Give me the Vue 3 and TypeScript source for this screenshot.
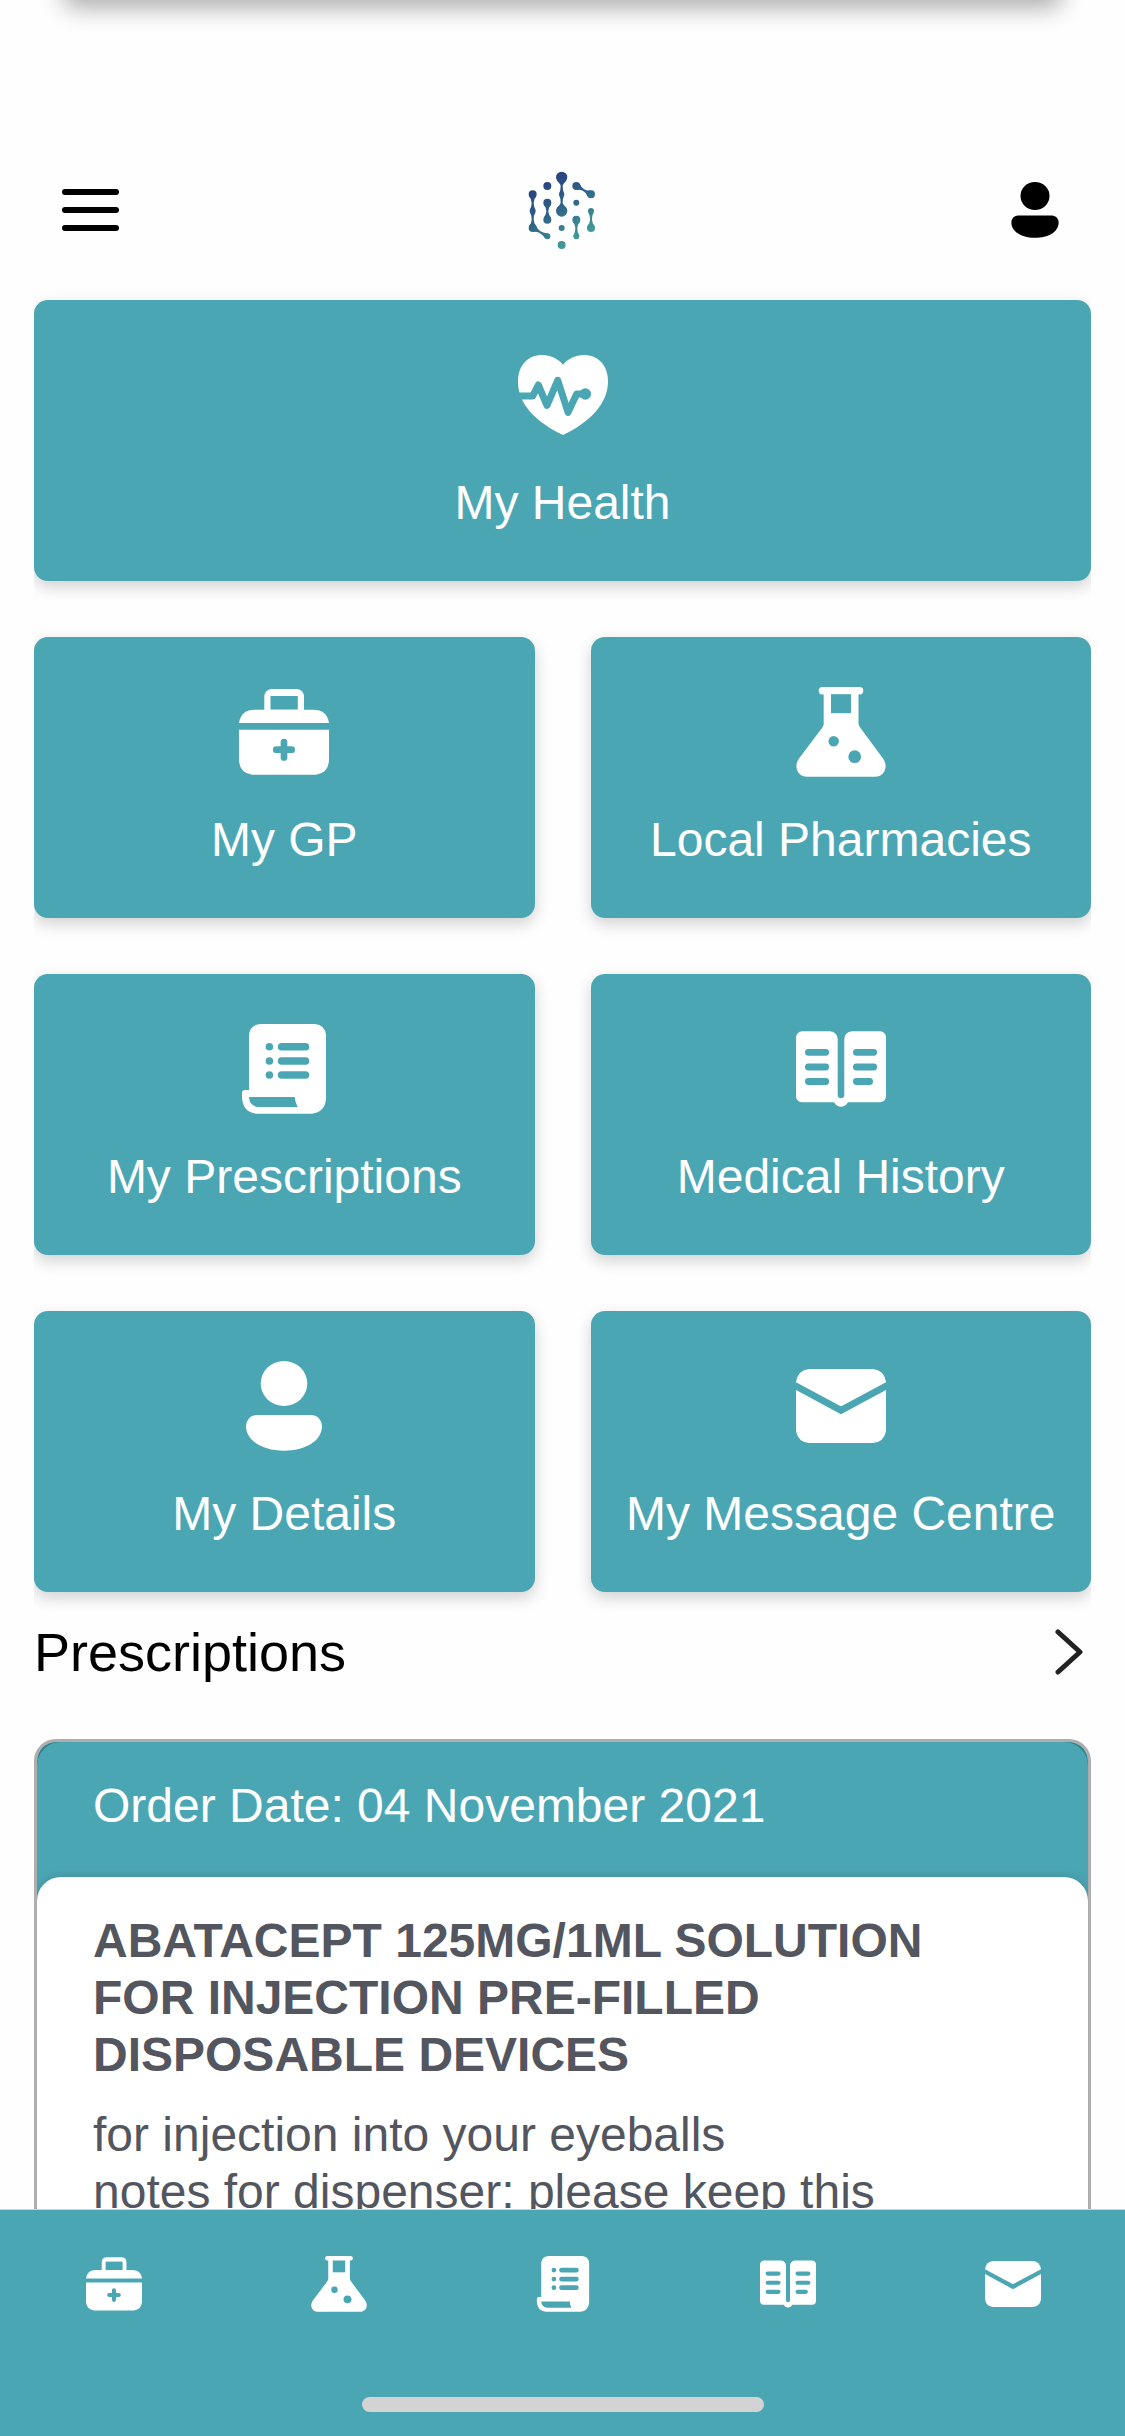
<script setup lang="ts">
interface Tile {
  label: string
  icon: string
  wide?: boolean
}

interface Dot {
  x: number
  y: number
  r: number
}

const tiles: Tile[] = [
  { label: 'My Health', icon: 'heart', wide: true },
  { label: 'My GP', icon: 'kit' },
  { label: 'Local Pharmacies', icon: 'flask' },
  { label: 'My Prescriptions', icon: 'scroll' },
  { label: 'Medical History', icon: 'book' },
  { label: 'My Details', icon: 'user' },
  { label: 'My Message Centre', icon: 'mail' },
]

const tabs: Tile[] = tiles.filter((t) => !t.wide && t.icon !== 'user')

const dots: Dot[] = [
  { x: 185, y: 83, r: 17 },
  { x: 185, y: 134, r: 8 },
  { x: 185, y: 184, r: 17 },
  { x: 142, y: 109, r: 12 },
  { x: 229, y: 109, r: 12 },
  { x: 273, y: 134, r: 12 },
  { x: 98, y: 134, r: 12 },
  { x: 98, y: 184, r: 9 },
  { x: 98, y: 235, r: 12 },
  { x: 142, y: 260, r: 9 },
  { x: 142, y: 159, r: 12 },
  { x: 142, y: 210, r: 12 },
  { x: 229, y: 159, r: 9 },
  { x: 229, y: 210, r: 12 },
  { x: 229, y: 260, r: 9 },
  { x: 273, y: 184, r: 9 },
  { x: 273, y: 235, r: 12 },
  { x: 185, y: 235, r: 9 },
  { x: 185, y: 286, r: 12 },
]

const links: [number, number][] = [
  [0, 1], [1, 2], [4, 5], [6, 7], [7, 8], [8, 9], [10, 11], [13, 14], [15, 16],
]

// Tapered neck between two dots of the logo, narrowest at its middle.
function neck([from, to]: [number, number]): string {
  const a = dots[from]
  const b = dots[to]
  const len = Math.hypot(b.x - a.x, b.y - a.y)
  const ux = (b.x - a.x) / len
  const uy = (b.y - a.y) / len
  const at = (x: number, y: number, side: number) => `${x - uy * side} ${y + ux * side}`
  const nearA = (side: number) => at(a.x + ux * a.r * 0.5, a.y + uy * a.r * 0.5, side * a.r * 0.86)
  const nearB = (side: number) => at(b.x - ux * b.r * 0.5, b.y - uy * b.r * 0.5, side * b.r * 0.86)
  const mid = (side: number) => at((a.x + b.x) / 2, (a.y + b.y) / 2, side)
  const bendA = (side: number) => at(a.x + ux * (a.r + 4), a.y + uy * (a.r + 4), side * 3)
  const bendB = (side: number) => at(b.x - ux * (b.r + 4), b.y - uy * (b.r + 4), side * 3)
  return (
    `M${nearA(1)}Q${bendA(1)} ${mid(3)}Q${bendB(1)} ${nearB(1)}` +
    `L${nearB(-1)}Q${bendB(-1)} ${mid(-3)}Q${bendA(-1)} ${nearA(-1)}Z`
  )
}
</script>

<template>
  <div class="app">
    <svg class="sprite" aria-hidden="true">
      <symbol id="heart" viewBox="0 0 90 90">
        <path fill="currentColor" d="M45 14.7C40 8.500 32 5 24.500 5C10 5 0 15 0 32C0 54 18 72 45 85C72 72 90 54 90 31C90 15 80 5 65.500 5C58 5 50 8.500 45 14.700z" />
        <path fill="none" stroke="#4ba6b4" stroke-width="7" stroke-linecap="round" stroke-linejoin="round" d="M-4 46H14.700L20.300 35L29 55.300L39.700 30.300L50 62.300L58.700 44H67" />
        <circle cx="67.3" cy="44" r="5.8" fill="#4ba6b4" />
      </symbol>
      <symbol id="kit" viewBox="0 0 90 90">
        <rect x="25.3" y="2" width="39.7" height="30" rx="7.5" fill="currentColor" />
        <rect x="31.5" y="9" width="27.3" height="13.700" fill="#4ba6b4" />
        <path fill="currentColor" d="M0 36Q2 22.700 16 22.700H74Q88 22.700 90 36z" />
        <path fill="currentColor" d="M0 42.700H90V74Q89 86 77 87.700H13Q1 86 0 74z" />
        <path fill="none" stroke="#4ba6b4" stroke-width="6.7" stroke-linecap="round" d="M45 55V70.400M37.300 62.700H52.700" />
      </symbol>
      <symbol id="flask" viewBox="0 0 90 90">
        <rect x="22.7" y="0" width="44.6" height="7.4" rx="3.7" fill="currentColor" />
        <path fill="currentColor" d="M27.700 5V37.500Q27.400 39 26 41L3 71.500C-3 80 2 89.700 11 89.700H79C88 89.700 93 80 87 71.500L64.500 41Q62.700 38.500 62.500 37V5z" />
        <rect x="35" y="7.2" width="20" height="19" fill="#4ba6b4" />
        <circle cx="37.7" cy="54.3" r="5.2" fill="#4ba6b4" />
        <circle cx="58.7" cy="69.7" r="6.4" fill="#4ba6b4" />
      </symbol>
      <symbol id="scroll" viewBox="0 0 90 90">
        <path fill="currentColor" d="M10 66V11Q11 1 21 0H76Q86 1 87 11V75Q86 88 73 89.700H17Q4 88 3 74V69Q3 66 6 66z" />
        <path fill="#4ba6b4" d="M10 73H55.800Q56 78 58.700 83H19Q10.500 82 10 73z" />
        <g fill="#4ba6b4">
          <circle cx="30.4" cy="22.7" r="3.8" />
          <circle cx="30.4" cy="37" r="3.8" />
          <circle cx="30.4" cy="51" r="3.8" />
        </g>
        <path fill="none" stroke="#4ba6b4" stroke-width="7.6" stroke-linecap="round" d="M42.600 22.700H66.500M42.600 37H66.500M42.600 51H66.500" />
      </symbol>
      <symbol id="book" viewBox="0 0 90 90">
        <path fill="currentColor" d="M6 7.300H34Q41 8 41.700 15V71Q42 74.300 45 74.300Q48 74.300 48.300 71V15Q49 8 56 7.300H84Q89.500 8 90 13V73Q89 78 84 78.300H52Q49.500 82.700 45 82.700Q40.500 82.700 38 78.300H6Q1 78 0 73V13Q1 8 6 7.300z" />
        <path fill="none" stroke="#4ba6b4" stroke-width="6.8" stroke-linecap="round" d="M12.400 28.300H29.700M12.400 43H29.700M12.400 57.500H29.700M60.400 28.300H77.700M60.400 43H77.700M60.400 57.500H73.600" />
      </symbol>
      <symbol id="user" viewBox="0 0 90 90">
        <ellipse cx="45" cy="22.5" rx="23.3" ry="22.5" fill="currentColor" />
        <path fill="currentColor" d="M17 54H73Q82 55 83 65C83 80 66 89.700 45 89.700S7 80 7 65Q8 55 17 54z" />
      </symbol>
      <symbol id="mail" viewBox="0 0 90 90">
        <path fill="currentColor" d="M13 8H77Q88 9 90 21V70Q88 81 77 82H13Q2 81 0 70V21Q2 9 13 8z" />
        <path fill="none" stroke="#4ba6b4" stroke-width="7" d="M-4 23L45 49.300L94 23" />
      </symbol>
    </svg>

    <div class="content">
      <header class="topbar">
        <div class="sheet"></div>
        <button class="icon-btn menu" type="button" aria-label="Menu">
          <span></span><span></span><span></span>
        </button>
        <svg class="logo" viewBox="84 64 207 237" role="img" aria-label="Home">
          <defs>
            <linearGradient id="logoFill" gradientUnits="userSpaceOnUse" x1="130" y1="90" x2="240" y2="260">
              <stop offset="0" stop-color="#2a3f80" />
              <stop offset="0.5" stop-color="#2f6689" />
              <stop offset="1" stop-color="#429a98" />
            </linearGradient>
          </defs>
          <g fill="url(#logoFill)">
            <path :d="links.map(neck).join('')" />
            <path :d="dots.map((d) => `M${d.x - d.r} ${d.y}a${d.r} ${d.r} 0 1 1 ${2 * d.r} 0a${d.r} ${d.r} 0 1 1 ${-2 * d.r} 0Z`).join('')" />
          </g>
        </svg>
        <button class="icon-btn profile" type="button" aria-label="Profile">
          <svg class="small-icon"><use href="#user" /></svg>
        </button>
      </header>

      <main>
        <div class="tiles">
          <button v-for="t in tiles" :key="t.label" type="button" class="tile" :class="{ wide: t.wide }">
            <svg class="tile-icon" aria-hidden="true"><use :href="'#' + t.icon" /></svg>
            <span>{{ t.label }}</span>
          </button>
        </div>

        <section class="prescriptions">
          <a class="section-head" href="#prescriptions">
            <h2>Prescriptions</h2>
            <svg class="chevron" viewBox="0 0 28 46" aria-hidden="true">
              <path d="M3 3L25 23L3 43" fill="none" stroke="#222" stroke-width="5" stroke-linecap="round" stroke-linejoin="round" />
            </svg>
          </a>
          <article class="order">
            <div class="order-wrap">
              <p class="order-date">Order Date: 04 November 2021</p>
            </div>
            <div class="order-body">
              <h3>ABATACEPT 125MG/1ML SOLUTION FOR INJECTION PRE-FILLED DISPOSABLE DEVICES</h3>
              <p>for injection into your eyeballs<br />notes for dispenser: please keep this</p>
            </div>
          </article>
        </section>
      </main>
    </div>

    <nav class="tabbar" aria-label="Main">
      <div class="tabs">
        <a v-for="t in tabs" :key="t.icon" :href="'#tab-' + t.icon" :aria-label="t.label">
          <svg class="small-icon"><use :href="'#' + t.icon" /></svg>
        </a>
      </div>
      <div class="home-bar"></div>
    </nav>
  </div>
</template>

<style>
body {
  margin: 0;
  background: #fefefe;
}
</style>

<style scoped>
.app {
  --teal: #4ba6b4;
  display: flex;
  flex-direction: column;
  height: 100vh;
  font-family: "Liberation Sans", Arial, sans-serif;
  font-size: 48px;
  line-height: 56px;
  color: #000;
}

.sprite {
  position: absolute;
  width: 0;
  height: 0;
}

.content {
  flex: 1;
  min-height: 0;
  overflow: hidden auto;
  scrollbar-width: none;
}

.topbar {
  position: relative;
  display: grid;
  grid-template-columns: 1fr auto 1fr;
  align-items: center;
  height: 180px;
  padding: 120px 62px 0;
}

.sheet {
  position: absolute;
  top: -40px;
  left: 64px;
  right: 64px;
  height: 40px;
  border-radius: 8px;
  box-shadow: 0 8px 24px rgba(0, 0, 0, 0.32);
}

.icon-btn {
  display: flex;
  padding: 0;
  border: 0;
  background: none;
  color: #000;
}

.menu {
  flex-direction: column;
  gap: 12px;
  width: 57px;
}

.menu span {
  height: 6px;
  border-radius: 3px;
  background: #000;
}

.profile {
  justify-self: end;
}

.logo {
  width: 69px;
  height: 79px;
}

.small-icon {
  display: block;
  width: 56px;
  height: 56px;
}

.tiles {
  display: grid;
  grid-template-columns: 1fr 1fr;
  gap: 56px;
  margin: 0 34px;
  overflow-x: clip;
}

.tile {
  display: flex;
  flex-direction: column;
  align-items: center;
  gap: 35px;
  padding: 50px 0;
  border: 0;
  border-radius: 14px;
  background: var(--teal);
  box-shadow: 0 6px 16px rgba(0, 0, 0, 0.18);
  color: #fff;
  font: inherit;
  white-space: nowrap;
}

.wide {
  grid-column: 1 / -1;
}

.tile-icon {
  width: 90px;
  height: 90px;
}

.prescriptions {
  margin: 29px 34px 0;
}

.section-head {
  display: flex;
  align-items: center;
  justify-content: space-between;
  padding-right: 8px;
  color: #000;
  text-decoration: none;
}

h2 {
  margin: 0;
  font-size: 54px;
  font-weight: 400;
  line-height: 62px;
}

.chevron {
  width: 28px;
  height: 46px;
}

.order {
  margin-top: 56px;
  border: 3px solid #aeaeae;
  border-radius: 22px;
  overflow: hidden;
}

.order-wrap {
  background: #31808c;
}

.order-date {
  margin: 0;
  padding: 36px 56px 67px;
  border-radius: 24px 24px 0 0;
  background: var(--teal);
  color: #fff;
}

.order-body {
  margin-top: -24px;
  padding: 35px 56px;
  border-radius: 24px;
  background: #fff;
  box-shadow: 0 0 12px rgba(0, 0, 0, 0.16);
  color: #53565e;
  line-height: 57px;
}

h3 {
  margin: 0 0 23px;
  font-size: 48px;
  font-weight: 700;
}

.order-body p {
  margin: 0;
}

.tabbar {
  display: flex;
  flex-direction: column;
  align-items: center;
  gap: 85px;
  padding: 46px 0 24px;
  border-top: 1px solid #d3d3d3;
  background: var(--teal);
}

.tabs {
  display: grid;
  grid-template-columns: repeat(5, 1fr);
  box-sizing: border-box;
  width: 100%;
  padding-left: 2px;
  justify-items: center;
  color: #fff;
}

.tabs a {
  color: inherit;
}

.home-bar {
  width: 402px;
  height: 15px;
  border-radius: 8px;
  background: #d3d3d3;
}
</style>
